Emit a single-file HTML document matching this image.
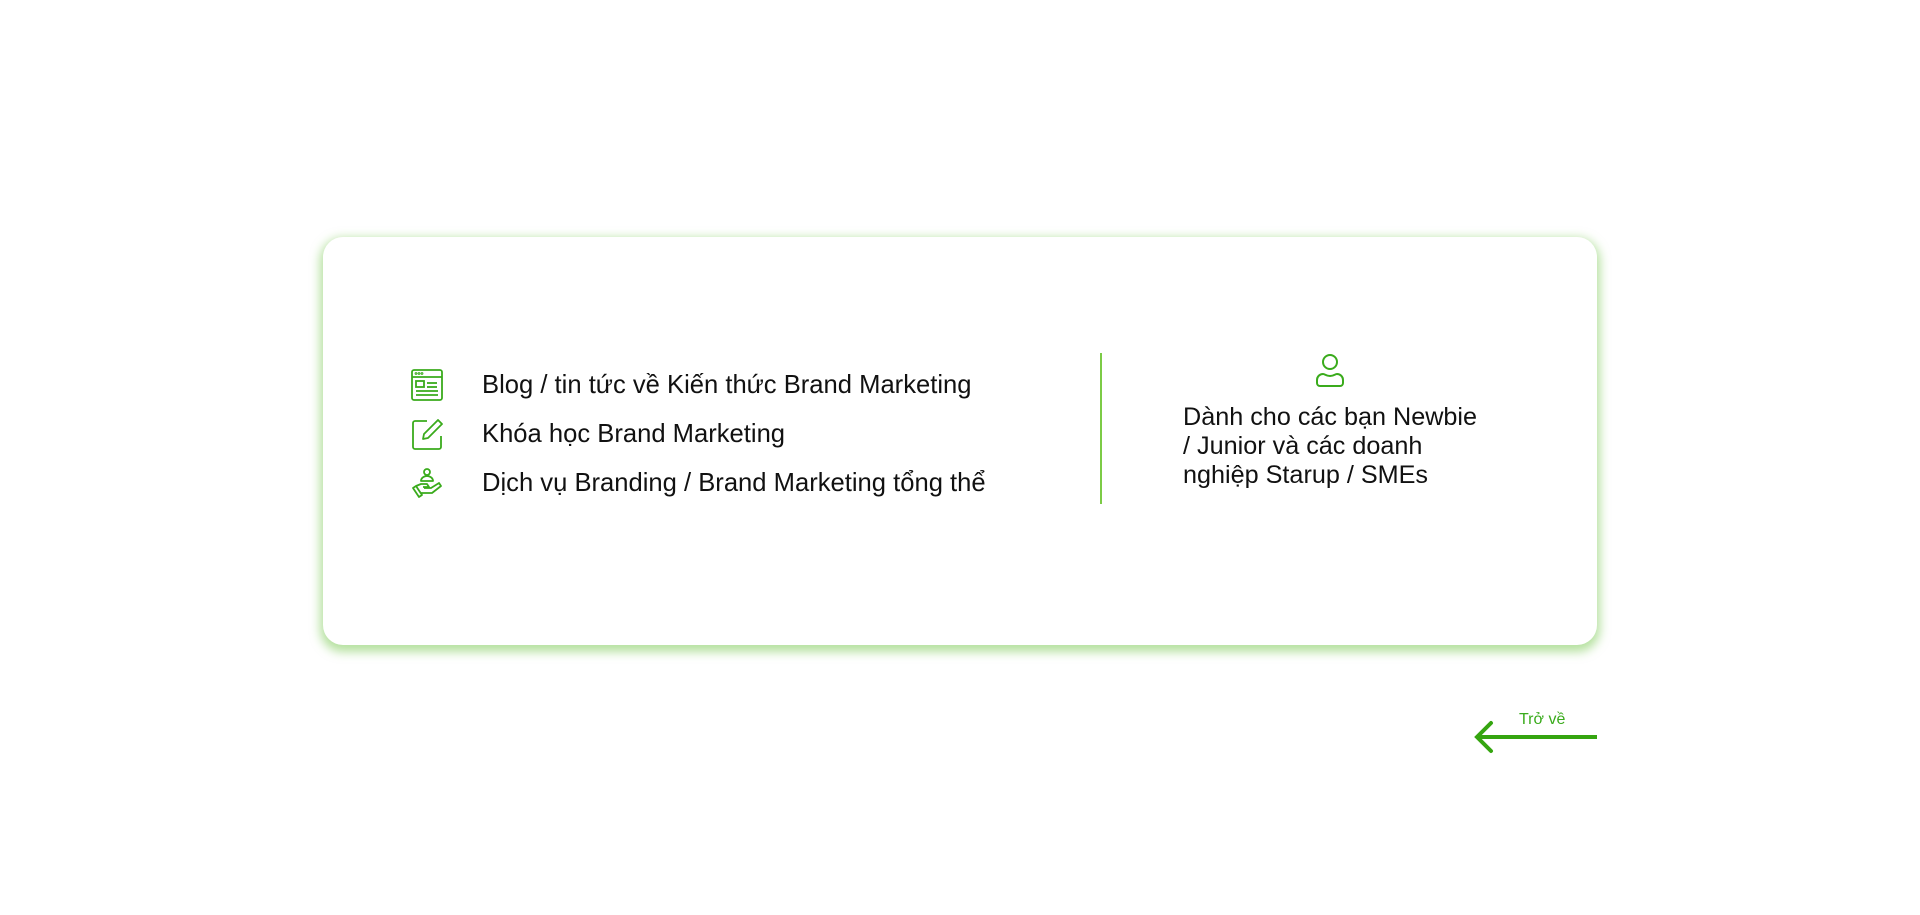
<!DOCTYPE html>
<html><head><meta charset="utf-8"><style>
html,body{margin:0;padding:0;width:1920px;height:915px;background:#fff;overflow:hidden;font-family:"Liberation Sans",sans-serif;}
.card{position:absolute;left:323px;top:237px;width:1274px;height:408px;border-radius:20px;background:#fff;box-shadow:0 4px 10px 3px rgba(120,200,80,0.55);}
.row{position:absolute;left:482px;font-size:25.6px;color:#111;white-space:nowrap;line-height:30px;}
.ic{position:absolute;left:411px;width:32px;height:32px;}
.div{position:absolute;left:1100px;top:353px;width:2px;height:151px;background:#7ccb46;}
.rt{position:absolute;left:1183px;top:403px;font-size:25.2px;line-height:29px;color:#111;white-space:nowrap;}
</style></head><body>
<div class="card"></div>
<svg class="ic" style="top:369px" viewBox="0 0 32 32" fill="none" stroke="#3aab1c" stroke-width="1.8"><rect x="1" y="1" width="30" height="30" rx="2"/><line x1="1" y1="8" x2="31" y2="8"/><circle cx="5" cy="4.5" r=".5"/><circle cx="8" cy="4.5" r=".5"/><circle cx="11" cy="4.5" r=".5"/><rect x="5" y="12" width="8" height="6"/><line x1="16" y1="14" x2="26" y2="14"/><line x1="16" y1="18" x2="26" y2="18"/><line x1="5" y1="22" x2="27" y2="22"/><line x1="5" y1="26" x2="27" y2="26"/></svg>
<div class="row" style="top:370px">Blog / tin tức về Kiến thức Brand Marketing</div>
<svg class="ic" style="top:418px" viewBox="0 0 32 32" fill="none" stroke="#3aab1c" stroke-width="1.8" stroke-linejoin="round"><path d="M16 3H4a2 2 0 0 0-2 2v24a2 2 0 0 0 2 2h24a2 2 0 0 0 2-2V18"/><path d="M27 2l4 4-14 14-5 1 1-5z"/></svg>
<div class="row" style="top:419px">Khóa học Brand Marketing</div>
<svg class="ic" style="top:467px" viewBox="0 0 32 32" fill="none" stroke="#3aab1c" stroke-width="1.8" stroke-linejoin="round"><circle cx="16" cy="5" r="3"/><path d="M10 14a6 5 0 0 1 12 0z"/><path d="M5 19l5-2h6l2 3h-6M13 21h7l8-5 2 3-9 7H10M2 21l6 9 3-2-6-9z"/></svg>
<div class="row" style="top:468px">Dịch vụ Branding / Brand Marketing tổng thể</div>
<div class="div"></div>
<svg style="position:absolute;left:1316px;top:353px" width="28" height="34" viewBox="0 0 28 34" fill="none" stroke="#3aab1c" stroke-width="2"><circle cx="14" cy="9" r="7"/><path d="M4 33a3 3 0 0 1-3-3v-3a6 6 0 0 1 6-6c2 0 3 2 7 2s5-2 7-2a6 6 0 0 1 6 6v3a3 3 0 0 1-3 3z"/></svg>
<div class="rt">Dành cho các bạn Newbie<br>/ Junior và các doanh<br>nghiệp Starup / SMEs</div>
<div style="position:absolute;left:1519px;top:711px;font-size:16px;color:#3aab1c">Trở về</div>
<svg style="position:absolute;left:1470px;top:718px" width="130" height="38" viewBox="0 0 130 38" fill="none" stroke="#35a510" stroke-width="4"><line x1="8" y1="19" x2="127" y2="19"/><path d="M21 5L7 19l14 14" stroke-linecap="round"/></svg>
</body></html>
